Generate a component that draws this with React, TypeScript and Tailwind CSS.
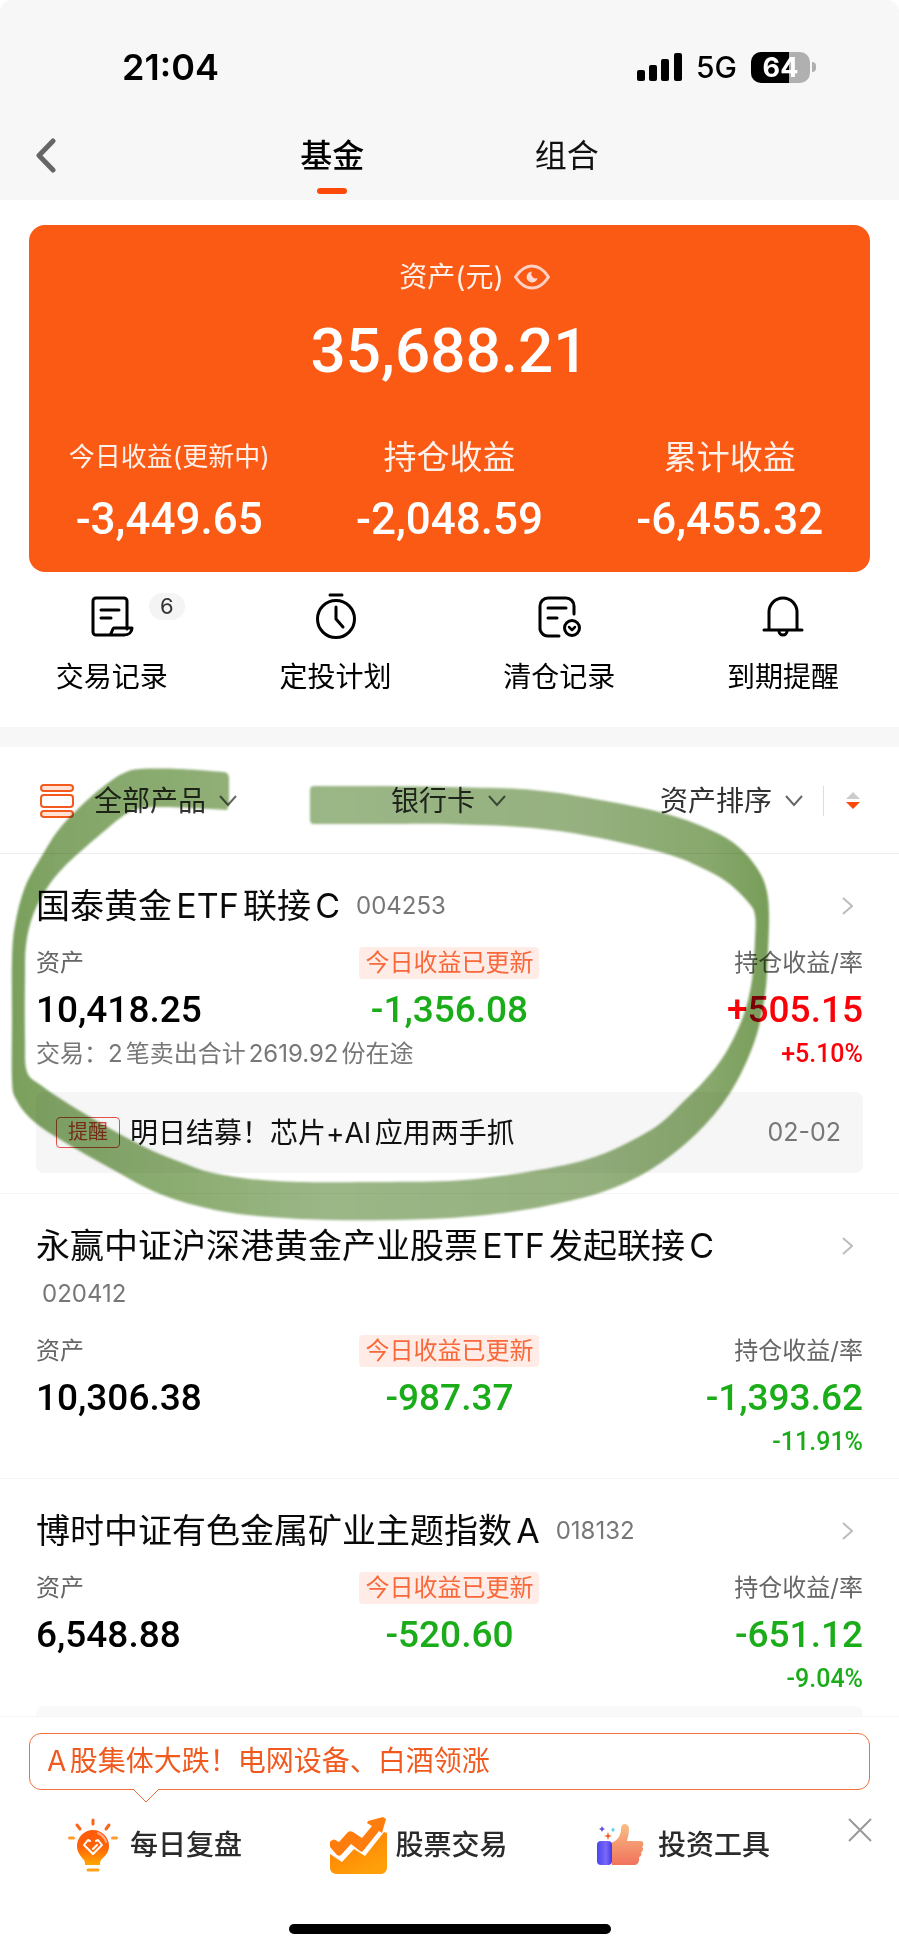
import React from 'react';

type Point = [number, number];

interface Fund {
  name: string;
  code: string;
  codeBelow?: boolean;
  asset: string;
  today: string;
  profit: string;
  rate: string;
  trade?: string;
  notice?: { tag: string; text: string; date: string };
}

const FUNDS: Fund[] = [
  {
    name: '国泰黄金ETF联接C',
    code: '004253',
    asset: '10,418.25',
    today: '-1,356.08',
    profit: '+505.15',
    rate: '+5.10%',
    trade: '交易：2笔卖出合计2619.92份在途',
    notice: { tag: '提醒', text: '明日结募！芯片+AI应用两手抓', date: '02-02' },
  },
  {
    name: '永赢中证沪深港黄金产业股票ETF发起联接C',
    code: '020412',
    codeBelow: true,
    asset: '10,306.38',
    today: '-987.37',
    profit: '-1,393.62',
    rate: '-11.91%',
  },
  {
    name: '博时中证有色金属矿业主题指数A',
    code: '018132',
    asset: '6,548.88',
    today: '-520.60',
    profit: '-651.12',
    rate: '-9.04%',
  },
];

const TOTALS = [
  { label: '今日收益(更新中)', value: '-3,449.65', size: 'text-[26px]' },
  { label: '持仓收益', value: '-2,048.59', size: 'text-[33px]' },
  { label: '累计收益', value: '-6,455.32', size: 'text-[33px]' },
];

const tone = (value: string) => (value.startsWith('-') ? 'text-[#1aad19]' : 'text-[#fb0007]');

/* ---------- icons ---------- */

const line = {
  fill: 'none',
  stroke: 'currentColor',
  strokeWidth: 3,
  strokeLinecap: 'round',
  strokeLinejoin: 'round',
} as const;

const RecordIcon = () => (
  <svg width="44" height="48" viewBox="0 0 44 48" {...line}>
    <path d="M37 36V8a3 3 0 0 0-3-3H6a3 3 0 0 0-3 3v31a3 3 0 0 0 3 3h28c5 0 8-3 8-7H24c-2 0-2 7-5 7" />
    <path d="M11 17h18M11 25h10" />
  </svg>
);

const PlanIcon = () => (
  <svg width="44" height="48" viewBox="0 0 44 48" {...line}>
    <circle cx="22" cy="26" r="18.5" />
    <path d="M16 2h12M22 14v12l7 8" />
  </svg>
);

const ClearedIcon = () => (
  <svg width="44" height="48" viewBox="0 0 44 48" {...line}>
    <path d="M37 21v-8a8 8 0 0 0-8-8H11a8 8 0 0 0-8 8v21a8 8 0 0 0 8 9h11" />
    <path d="M11 15h18M11 25h9" />
    <circle cx="35" cy="35" r="7.5" />
    <path d="m32 34 3 3 3-3" strokeWidth="2.5" />
  </svg>
);

const BellIcon = () => (
  <svg width="44" height="48" viewBox="0 0 44 48" {...line}>
    <path d="M8 37V19a14 14 0 0 1 28 0v18M3 37h38" />
    <path d="M18 38a4 4 0 0 0 8 0" />
  </svg>
);

const EyeIcon = () => (
  <svg width="36" height="26" viewBox="0 0 36 26" fill="none">
    <path d="M1.500 13C6 6 11.500 2 18 2s12 4 16.500 11C30 20 24.500 24 18 24S6 20 1.500 13Z" stroke="#ffd0c4" strokeWidth="3" strokeLinejoin="round" />
    <path d="M18 7.500a5.500 5.500 0 1 0 5.500 6.500 4.500 4.500 0 0 1-5.500-6.500Z" fill="#ffd9d0" />
  </svg>
);

const ListIcon = () => (
  <svg width="34" height="34" viewBox="0 0 34 34" stroke="#f45a1e" strokeWidth="2" fill="#ffe1d5">
    <rect x="1" y="1" width="32" height="6" rx="3" />
    <rect x="1" y="11" width="32" height="12" rx="3" fill="#fff" />
    <rect x="1" y="27" width="32" height="6" rx="3" />
  </svg>
);

const ChevronDown = () => (
  <svg width="18" height="12" viewBox="0 0 18 12" fill="none" stroke="#666" strokeWidth="2">
    <path d="m1 1 8 9 8-9" />
  </svg>
);

const ChevronRight = () => (
  <svg width="11" height="18" viewBox="0 0 11 18" fill="none" stroke="#bdbdbd" strokeWidth="2">
    <path d="m1 1 9 8-9 8" />
  </svg>
);

const BulbIcon = () => (
  <svg width="54" height="54" viewBox="0 0 54 54" fill="none">
    <defs>
      <linearGradient id="bulb" x1="0" y1="0" x2="0" y2="1">
        <stop offset="0" stopColor="#ff5a0a" />
        <stop offset="0.5" stopColor="#ff6408" />
        <stop offset="1" stopColor="#ffa800" />
      </linearGradient>
    </defs>
    <path d="M25 12a16 16 0 0 0-16 16c0 6 3 9 6 13 2 2 2 3 2 6h15c0-3 0-4 2-6 4-4 7-7 7-13a16 16 0 0 0-16-16Z" fill="url(#bulb)" />
    <path d="M20 52h10" stroke="#ffa21a" strokeWidth="3" strokeLinecap="round" />
    <path d="M25 2v4M9 7l3 4M41 7l-3 4" stroke="#f7661a" strokeWidth="3" strokeLinecap="round" />
    <path d="M1.500 20h4M44.500 20h4" stroke="#ff9a2e" strokeWidth="3" strokeLinecap="round" />
    <path d="m22 23-2-1-4 5 9 9 9-9-4-5-2 1M25 31l4-4" stroke="#fff" strokeWidth="2" strokeLinecap="round" strokeLinejoin="round" />
    <path d="M30 15c4 2 7 5 8 9" stroke="#ffa98a" strokeWidth="2" strokeLinecap="round" />
  </svg>
);

const StockIcon = () => (
  <svg width="57" height="57" viewBox="0 0 57 57" fill="none">
    <defs>
      <linearGradient id="stock" x1="0" y1="0" x2="0.600" y2="1">
        <stop offset="0" stopColor="#ff7a00" />
        <stop offset="1" stopColor="#ffa00a" />
      </linearGradient>
    </defs>
    <path d="M57 16v35a6 6 0 0 1-6 6H6a6 6 0 0 1-6-6V37l12 8 12-13 11 7 19-24Z" fill="url(#stock)" />
    <path d="M1 24c2-2 4-2 6 0l2 1 9-10c2-1 3-1 5 0l9 6 10-12-5-3 1-2 15-4 3 2-4 14-3-2-16 20c-1 1-2 1-3 0l-9-7-10 11c-1 1-3 1-4 0l-7-8c-1-2-1-5 1-6Z" fill="#ff7d0c" />
  </svg>
);

const ThumbIcon = () => (
  <svg width="54" height="42" viewBox="0 0 54 42" fill="none">
    <defs>
      <linearGradient id="cuff" x1="0" y1="0" x2="1" y2="0">
        <stop offset="0" stopColor="#4a45ee" />
        <stop offset="0.600" stopColor="#7a68f8" />
        <stop offset="1" stopColor="#4238e8" />
      </linearGradient>
      <linearGradient id="hand" x1="0" y1="0" x2="0" y2="1">
        <stop offset="0" stopColor="#f8bd84" />
        <stop offset="1" stopColor="#f0735c" />
      </linearGradient>
    </defs>
    <path d="M15 19c6-2 10-7 10-14 0-7 8-6 8 0 0 4-1 8-2 12h14c3 0 3 5 1 6 2 1 1 5-1 5 1 2 0 5-2 5 1 3-1 8-4 8H16Z" fill="url(#hand)" />
    <rect x="1" y="17" width="15" height="24" rx="4" fill="url(#cuff)" />
    <path d="m6 2 1 2 2 1-2 1-1 2-1-2-2-1 2-1Z" fill="#5a4fe0" />
    <path d="m17 3 1 2 1 1-1 1-1 1-1-1-1-1 1-1Z" fill="#5fd6ee" />
    <path d="m12 8 1 3 3 1-3 1-1 3-1-3-3-1 3-1Z" fill="#f4602a" />
  </svg>
);

/* ---------- marker stroke drawn over the first fund ---------- */

const OUTER: Point[] = [
  [314, 786], [380, 786], [450, 787], [533, 790], [600, 800], [667, 814], [717, 833], [743, 851], [760, 873], [767, 892],
  [769, 915], [768, 950], [765, 995], [754, 1043], [730, 1093], [695, 1135], [650, 1170], [605, 1191], [560, 1203],
  [510, 1212], [450, 1218], [390, 1220], [330, 1220], [270, 1217], [215, 1210], [160, 1194], [110, 1168], [56, 1137],
  [30, 1118], [16, 1099], [12, 1080], [12, 1020], [12, 960], [15, 925], [25, 887], [43, 854], [60, 828], [84, 803],
  [108, 783], [124, 773], [140, 769], [180, 769], [224, 772],
];

const INNER: Point[] = [
  [227, 810], [190, 808], [155, 807], [137, 809], [123, 816], [102, 833], [80, 852], [63, 868], [47, 888], [33, 915],
  [26, 945], [25, 980], [25, 1040], [27, 1072], [42, 1086], [67, 1103], [97, 1121], [127, 1138], [155, 1152], [183, 1163],
  [209, 1172], [250, 1179], [300, 1182], [370, 1182], [450, 1181], [500, 1176], [550, 1168], [585, 1160], [617, 1148],
  [657, 1126], [683, 1102], [705, 1080], [725, 1054], [743, 1017], [752, 980], [755, 940], [755, 915], [748, 902],
  [727, 882], [700, 867], [667, 854], [600, 838], [533, 828], [450, 824], [380, 824], [314, 824],
];

// Catmull-Rom through the points, written as cubic segments
const smooth = (pts: Point[]) =>
  pts.slice(1).map((p, i) => {
    const a = pts[Math.max(i - 1, 0)];
    const b = pts[i];
    const c = pts[Math.min(i + 2, pts.length - 1)];
    return `C${b[0] + (p[0] - a[0]) / 6} ${b[1] + (p[1] - a[1]) / 6} ${p[0] - (c[0] - b[0]) / 6} ${p[1] - (c[1] - b[1]) / 6} ${p[0]} ${p[1]}`;
  }).join('');

const MarkerStroke = () => (
  <svg
    className="pointer-events-none absolute left-0 top-0 w-full mix-blend-multiply"
    viewBox="0 0 899 1953"
    aria-hidden="true"
  >
    <defs>
      <linearGradient id="ink" gradientUnits="userSpaceOnUse" x1="12" y1="0" x2="769" y2="0">
        <stop offset="0" stopColor="#7a9f5b" />
        <stop offset="0.060" stopColor="#82a567" />
        <stop offset="0.250" stopColor="#8eae74" />
        <stop offset="0.420" stopColor="#9bb787" />
        <stop offset="0.750" stopColor="#96b17f" />
        <stop offset="0.920" stopColor="#88a86d" />
        <stop offset="1" stopColor="#779d58" />
      </linearGradient>
      <filter id="soft" x="-5%" y="-5%" width="110%" height="110%">
        <feGaussianBlur stdDeviation="1" />
      </filter>
    </defs>
    <path
      d={`M314 786${smooth(OUTER)}Q229 773 229 778V804L227 810${smooth(INNER)}Q310 824 310 820V790Q310 786 314 786Z`}
      fill="url(#ink)"
      filter="url(#soft)"
    />
  </svg>
);

/* ---------- page parts ---------- */

const StatusBar = () => (
  <div className="flex h-[110px] items-center justify-between pl-[122px] pr-[83px] pt-6 text-black">
    <span className="text-[36px] font-semibold leading-none">21:04</span>
    <div className="flex items-center">
      <svg width="45" height="28" viewBox="0 0 45 28">
        <rect y="17" width="8" height="11" rx="2" />
        <rect x="12" y="12" width="8" height="16" rx="2" />
        <rect x="24" y="6" width="8" height="22" rx="2" />
        <rect x="37" width="8" height="28" rx="2" />
      </svg>
      <span className="ml-[14px] text-[30px] font-medium leading-none">5G</span>
      <div className="relative ml-[14px] h-[31px] w-[59px] overflow-hidden rounded-[10px] bg-[#b0b0b0]">
        <div className="h-full w-[64%] bg-black" />
        <span className="absolute inset-0 text-center text-[27px] font-bold leading-[31px] text-white">64</span>
      </div>
      <div className="ml-[2px] h-[10px] w-1 rounded-r-full bg-[#b0b0b0]" />
    </div>
  </div>
);

const Tabs = () => (
  <nav className="flex h-[90px] pr-[215px]">
    <button className="flex w-[215px] items-center pl-9" aria-label="返回">
      <svg width="20" height="35" viewBox="0 0 20 35" fill="none" stroke="#666" strokeWidth="5" strokeLinecap="round" strokeLinejoin="round">
        <path d="M17 3 3 17.500 17 32" />
      </svg>
    </button>
    <button className="flex flex-1 flex-col items-center pt-[22px] text-black">
      <span className="text-[32px] font-medium leading-[48px]">基金</span>
      <span className="mt-2 h-[6px] w-[30px] rounded-full bg-[#fd4a0b]" />
    </button>
    <button className="flex flex-1 flex-col items-center pt-[22px] text-[#111]">
      <span className="text-[32px] leading-[48px]">组合</span>
    </button>
  </nav>
);

const AssetCard = () => (
  <section className="mx-[29px] mt-[25px] rounded-2xl bg-[#fa5a14] pb-[25px] pt-8 text-white">
    <div className="flex items-center justify-center gap-[10px]">
      <span className="pl-[50px] text-[28px] leading-[40px] text-[#fff1ea]">资产(元)</span>
      <button aria-label="显示金额"><EyeIcon /></button>
    </div>
    <p className="mt-[14px] text-center font-['Roboto',sans-serif] text-[62px] font-medium leading-[80px]">35,688.21</p>
    <dl className="mt-[42px] grid grid-cols-3 text-center">
      {TOTALS.map((item) => (
        <div key={item.label}>
          <dt className={`${item.size} leading-[48px] text-[#fff1ea]`}>{item.label}</dt>
          <dd className="mt-[10px] font-['Roboto',sans-serif] text-[44px] font-medium leading-[56px]">{item.value}</dd>
        </div>
      ))}
    </dl>
  </section>
);

const ACTIONS = [
  { label: '交易记录', icon: <RecordIcon />, count: 6 },
  { label: '定投计划', icon: <PlanIcon /> },
  { label: '清仓记录', icon: <ClearedIcon /> },
  { label: '到期提醒', icon: <BellIcon /> },
];

const Actions = () => (
  <section className="grid grid-cols-4 pb-[29px] pr-1 pt-[21px] text-black">
    {ACTIONS.map((action) => (
      <button key={action.label} className="flex flex-col items-center">
        <span className="relative">
          {action.icon}
          {action.count && (
            <span className="absolute -right-[51px] top-0 h-[27px] w-9 rounded-full bg-[#f4f4f4] text-[22px] leading-[27px] text-[#333]">
              {action.count}
            </span>
          )}
        </span>
        <span className="mt-4 text-[28px] leading-[41px]">{action.label}</span>
      </button>
    ))}
  </section>
);

const Dropdown = ({ name, value }: { name: string; value: string }) => (
  <label className="flex items-center gap-3">
    <select aria-label={name} className="appearance-none bg-transparent text-[28px] leading-[40px] text-[#333]">
      <option>{value}</option>
    </select>
    <ChevronDown />
  </label>
);

const Filters = () => (
  <section className="flex h-[107px] items-center justify-between border-b border-[#ededed] pl-10 pr-[39px] pt-[2px]">
    <div className="flex items-center gap-5">
      <ListIcon />
      <Dropdown name="产品" value="全部产品" />
    </div>
    <Dropdown name="支付方式" value="银行卡" />
    <div className="flex items-center">
      <Dropdown name="排序" value="资产排序" />
      <span className="ml-5 h-[30px] w-px bg-[#ddd]" />
      <button className="ml-[22px]" aria-label="切换升降序">
        <svg width="14" height="18" viewBox="0 0 14 18">
          <path d="m7 0 7 7H0Z" fill="#ccc" />
          <path d="m7 17 7-7H0Z" fill="#fd4a0b" />
        </svg>
      </button>
    </div>
  </section>
);

const FundItem = ({ fund }: { fund: Fund }) => (
  <li className="border-b border-[#f5f5f5] px-9 pb-5 pt-7 last:border-b-0 last:pb-[11px]">
    <div className="flex items-center justify-between">
      <div className="flex items-center">
        <h2 className="text-[34px] leading-[48px] text-[#0a0a0a]">{fund.name}</h2>
        {!fund.codeBelow && <span className="ml-4 text-[24px] text-[#777]">{fund.code}</span>}
      </div>
      <a href="#" aria-label={fund.name} className="pr-[10px]"><ChevronRight /></a>
    </div>
    {fund.codeBelow && <p className="pl-[6px] text-[24px] leading-[48px] text-[#777]">{fund.code}</p>}

    <div className="mt-[17px] grid grid-cols-3 items-center text-[24px] leading-[32px] text-[#666]">
      <span>资产</span>
      <span className="justify-self-center rounded bg-[#ffece6] px-[6px] text-[#f8683a]">今日收益已更新</span>
      <span className="text-right">持仓收益/率</span>
    </div>
    <div className="mt-[10px] grid grid-cols-3 font-['Roboto',sans-serif] text-[37px] font-medium leading-[42px]">
      <span className="text-black">{fund.asset}</span>
      <span className={`text-center ${tone(fund.today)}`}>{fund.today}</span>
      <span className={`text-right ${tone(fund.profit)}`}>{fund.profit}</span>
    </div>
    <div className="mt-[7px] flex justify-between leading-[32px]">
      <span className="text-[24px] text-[#777]">{fund.trade}</span>
      <span className={`font-['Roboto',sans-serif] text-[25px] font-medium ${tone(fund.rate)}`}>{fund.rate}</span>
    </div>

    {fund.notice && (
      <a href="#" className="mt-[22px] flex h-[81px] items-center rounded-lg bg-[#f6f6f6] pl-5 pr-[22px]">
        <span className="rounded border border-[#e2504a] px-[11px] text-[20px] leading-[29px] text-[#e2433c]">{fund.notice.tag}</span>
        <span className="ml-[10px] text-[28px] text-[#111]">{fund.notice.text}</span>
        <span className="ml-auto text-[25px] text-[#777]">{fund.notice.date}</span>
      </a>
    )}
  </li>
);

const TOOLS = [
  { label: '每日复盘', icon: <BulbIcon /> },
  { label: '股票交易', icon: <StockIcon /> },
  { label: '投资工具', icon: <ThumbIcon /> },
];

const BottomBar = () => (
  <footer className="border-t border-[#f5f5f5] bg-white pb-[18px] pt-4">
    <a href="#" className="relative mx-[29px] block rounded-xl border border-[#f0703f] px-[17px] text-[28px] leading-[55px] text-[#f15a1f]">
      A股集体大跌！电网设备、白酒领涨
      <svg className="absolute left-[103px] top-full" width="26" height="15" viewBox="0 0 26 15" fill="#fff">
        <path d="M1 0h24v2H1Z" />
        <path d="m1 1 12 12L25 1" stroke="#f0703f" />
      </svg>
    </a>
    <div className="mt-[26px] flex pl-[23px]">
      <nav className="grid flex-1 grid-cols-3">
        {TOOLS.map((tool) => (
          <a key={tool.label} href="#" className="flex h-[58px] items-center justify-center gap-2 text-[28px] font-medium text-[#2b2b2b]">
            {tool.icon}
            {tool.label}
          </a>
        ))}
      </nav>
      <button className="flex h-7 w-[84px] items-center justify-end pr-[27px]" aria-label="关闭">
        <svg width="24" height="24" viewBox="0 0 24 24" stroke="#999" strokeWidth="2">
          <path d="m1 1 22 22M23 1 1 23" />
        </svg>
      </button>
    </div>
    <div className="mx-auto mt-[50px] h-[10px] w-[322px] rounded-full bg-black" />
  </footer>
);

export default function App() {
  return (
    <div className="relative min-h-screen bg-white font-['Inter','Noto_Sans_CJK_SC',sans-serif] [text-autospace:normal]">
      <header className="rounded-t-xl bg-[#f7f7f7]">
        <StatusBar />
        <Tabs />
      </header>
      <main>
        <AssetCard />
        <Actions />
        <div className="h-5 bg-[#f7f7f7]" />
        <Filters />
        <ul>
          {FUNDS.map((fund) => <FundItem key={fund.code} fund={fund} />)}
        </ul>
        <div className="mx-9 h-[10px] rounded-t-lg bg-[#f9f9f9]" />
      </main>
      <BottomBar />
      <MarkerStroke />
    </div>
  );
}
